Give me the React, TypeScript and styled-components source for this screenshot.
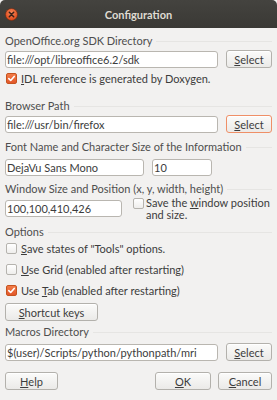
import * as React from 'react';
import styled, { createGlobalStyle } from 'styled-components';

const GlobalStyle = createGlobalStyle`
  html, body {
    margin: 0;
    padding: 0;
    background: #f2f1f0;
  }
  body {
    font-family: Lato, "Noto Sans", sans-serif;
    font-size: 11px;
    color: #3c3c3c;
  }
`;

const StyledWindow = styled.div`
  width: 277px;
  height: 400px;
  background: #f2f1f0;
  overflow: hidden;
  display: flex;
  flex-direction: column;
`;

const TitleBar = styled.div`
  height: 28px;
  flex: none;
  display: flex;
  align-items: center;
  position: relative;
  background: linear-gradient(#44433f, #3a3935);
  border-radius: 5px 5px 0 0;

  svg{
    margin-left: 5px;
  }
`;

const Title = styled.div`
  position: absolute;
  left: 0;
  right: 0;
  text-align: center;
  color: #dfdbd2;
  font-weight: bold;
  font-size: 11px;
  pointer-events: none;
`;

const Body = styled.div`
  padding: 0 5px;
  display: flex;
  flex-direction: column;
`;

const SectionLabel = styled.div<{ $top: number }>`
  margin-top: ${p => p.$top}px;
  height: 14px;
  line-height: 14px;
  display: flex;
  align-items: center;
  gap: 4px;
  white-space: nowrap;
  color: #4e4e4e;

  &:after{
    content: "";
    flex: 1;
    height: 1px;
    background: #e6e5e3;
  }
`;

const Row = styled.div<{ $top: number }>`
  margin-top: ${p => p.$top}px;
  display: flex;
  align-items: center;
  height: 18px;
`;

const TextBox = styled.div<{ $width: number; $ml?: number }>`
  width: ${p => p.$width}px;
  margin-left: ${p => p.$ml || 0}px;
  height: 17px;
  box-sizing: border-box;
  background: #ffffff;
  border: 1px solid #b9b6b0;
  border-radius: 3px;
  padding: 0 1px;
  line-height: 15px;
  white-space: nowrap;
  overflow: hidden;
  color: #3c3c3c;
`;

const Button = styled.div<{ $width: number; $ml?: number; $focus?: boolean }>`
  width: ${p => p.$width}px;
  margin-left: ${p => p.$ml || 0}px;
  height: 18px;
  box-sizing: border-box;
  border: 1px solid ${p => p.$focus ? '#ef8f67' : '#b3b1ac'};
  border-radius: 3px;
  background: linear-gradient(#fbfbfa, #ebeae8);
  box-shadow: inset 0 1px 0 #ffffff;
  display: flex;
  align-items: center;
  justify-content: center;
  color: #3c3c3c;
  flex: none;

  u{
    text-decoration-thickness: 1px;
    text-underline-offset: 1px;
  }
`;

const CheckRow = styled.div<{ $top: number }>`
  margin-top: ${p => p.$top}px;
  display: flex;
  align-items: center;
  height: 14px;
  padding-left: 1px;
  gap: 4px;
  white-space: nowrap;

  u{
    text-decoration-thickness: 1px;
    text-underline-offset: 1px;
  }
`;

const Box = styled.span<{ $checked?: boolean }>`
  width: 11px;
  height: 11px;
  box-sizing: border-box;
  border-radius: 2px;
  flex: none;
  display: flex;
  align-items: center;
  justify-content: center;
  border: 1px solid ${p => p.$checked ? '#c6531f' : '#b5b3ae'};
  background: ${p => p.$checked
    ? 'linear-gradient(#f27b47, #e2572a)'
    : 'linear-gradient(#ffffff, #efeeec)'};
`;

const SideCheck = styled.div`
  margin-left: 11px;
  margin-top: 2px;
  display: flex;
  align-items: flex-start;
  gap: 2px;
  line-height: 12px;

  ${Box}{
    margin-top: 1px;
  }

  u{
    text-decoration-thickness: 1px;
    text-underline-offset: 1px;
  }
`;

const Spacer = styled.div`
  flex: 1;
`;

const CloseIcon = () => (
  <svg width="13" height="13" viewBox="0 0 13 13">
    <defs>
      <radialGradient id="cg" cx="50%" cy="35%" r="60%">
        <stop offset="0%" stopColor="#f7875a" />
        <stop offset="100%" stopColor="#df4c1c" />
      </radialGradient>
    </defs>
    <circle cx="6.5" cy="6.5" r="6" fill="url(#cg)" stroke="#6e2a12" strokeWidth="0.6" />
    <path d="M4.3 4.3 L8.7 8.7 M8.7 4.3 L4.3 8.7" stroke="#3a2219" strokeWidth="1.5" strokeLinecap="round" />
  </svg>
);

const Check = ({ checked }: { checked?: boolean }) => (
  <Box $checked={checked}>
    {checked && (
      <svg width="9" height="9" viewBox="0 0 9 9">
        <path d="M1.8 4.6 L3.7 6.5 L7.2 2.4" stroke="#ffffff" strokeWidth="1.6" fill="none" strokeLinecap="round" strokeLinejoin="round" />
      </svg>
    )}
  </Box>
);

const SelectButton = ({ focus }: { focus?: boolean }) => (
  <Button $width={46} $ml={8} $focus={focus}><span><u>S</u>elect</span></Button>
);

const App: React.FC = () => {
  return (
    <StyledWindow>
      <GlobalStyle />
      <TitleBar>
        <CloseIcon />
        <Title>Configuration</Title>
      </TitleBar>
      <Body>
        <SectionLabel $top={6}>OpenOffice.org SDK Directory</SectionLabel>
        <Row $top={2}>
          <TextBox $width={213}>file:///opt/libreoffice6.2/sdk</TextBox>
          <SelectButton />
        </Row>
        <CheckRow $top={3}>
          <Check checked />
          <span><u>I</u>DL reference is generated by Doxygen.</span>
        </CheckRow>

        <SectionLabel $top={14}>Browser Path</SectionLabel>
        <Row $top={2}>
          <TextBox $width={213}>file:///usr/bin/firefox</TextBox>
          <SelectButton focus />
        </Row>

        <SectionLabel $top={7}>Font Name and Character Size of the Information</SectionLabel>
        <Row $top={4}>
          <TextBox $width={139}>DejaVu Sans Mono</TextBox>
          <TextBox $width={60} $ml={8}>10</TextBox>
        </Row>

        <SectionLabel $top={6}>Window Size and Position (x, y, width, height)</SectionLabel>
        <Row $top={3}>
          <TextBox $width={117}>100,100,410,426</TextBox>
          <SideCheck>
            <Check />
            <span>Save the <u>w</u>indow position<br />and size.</span>
          </SideCheck>
        </Row>

        <SectionLabel $top={8}>Options</SectionLabel>
        <CheckRow $top={2}>
          <Check />
          <span><u>S</u>ave states of "Tools" options.</span>
        </CheckRow>
        <CheckRow $top={7}>
          <Check />
          <span><u>U</u>se Grid (enabled after restarting)</span>
        </CheckRow>
        <CheckRow $top={7}>
          <Check checked />
          <span>Use <u>T</u>ab (enabled after restarting)</span>
        </CheckRow>
        <Row $top={6}>
          <Button $width={93}><span><u>S</u>hortcut keys</span></Button>
        </Row>

        <SectionLabel $top={4}>Macros Directory</SectionLabel>
        <Row $top={4}>
          <TextBox $width={213}>$(user)/Scripts/python/pythonpath/mri</TextBox>
          <SelectButton />
        </Row>

        <Row $top={11}>
          <Button $width={53}><span><u>H</u>elp</span></Button>
          <Spacer />
          <Button $width={56}><span><u>O</u>K</span></Button>
          <Button $width={54} $ml={7}><span><u>C</u>ancel</span></Button>
        </Row>
      </Body>
    </StyledWindow>
  );
};

export default App;
